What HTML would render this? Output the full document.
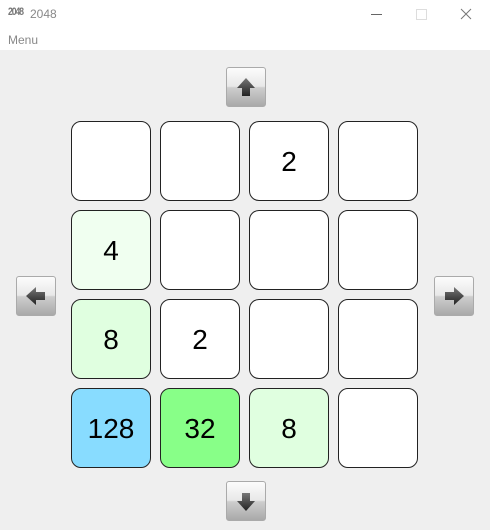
<!DOCTYPE html><html><head><style>
body{margin:0;width:490px;height:530px;background:#efefef;font-family:"Liberation Sans",sans-serif;position:relative;overflow:hidden}
.top{position:absolute;left:0;top:0;width:490px;height:50px;background:#fff}
.t{position:absolute;font-size:12px;color:#888}
.tile{position:absolute;width:78px;height:78px;border:1px solid #222;border-radius:10px;background:#fff;box-sizing:content-box;text-align:center;line-height:80px;font-size:28px;color:#000;font-family:"Liberation Sans",sans-serif}
.btn{position:absolute;width:38px;height:38px;border:1px solid #aaa;border-radius:3px;background:linear-gradient(#fcfcfc,#e8e8e8 48%,#cdcdcd 52%,#a9a9a9)}
.btn svg{position:absolute;left:0;top:0}
</style></head><body>
<div class="top"></div>
<div class="t" style="left:8px;top:6px;font-size:11px;font-weight:bold;color:#777;letter-spacing:-1.5px;transform:scaleX(0.8);transform-origin:left">2048</div>
<div class="t" style="left:30px;top:7px">2048</div>
<div class="t" style="left:8px;top:33px">Menu</div>
<div style="position:absolute;left:371px;top:14px;width:11px;height:1px;background:#666"></div>
<div style="position:absolute;left:416px;top:9px;width:9px;height:9px;border:1px solid #ddd"></div>
<svg style="position:absolute;left:460px;top:8px" width="12" height="12"><path d="M1 1L11 11M11 1L1 11" stroke="#777" stroke-width="1"/></svg>
<div class="btn" style="left:226px;top:67px"><svg width="38" height="38"><defs><linearGradient id="g" x1="0" y1="0" x2="0" y2="1"><stop offset="0" stop-color="#777"/><stop offset="1" stop-color="#222"/></linearGradient></defs><path d="M19 10L28 20H23V28H15V20H10Z" fill="url(#g)"/></svg></div>
<div class="btn" style="left:226px;top:481px"><svg width="38" height="38"><path d="M19 29L28 19H23V11H15V19H10Z" fill="url(#g)"/></svg></div>
<div class="btn" style="left:16px;top:276px"><svg width="38" height="38"><path d="M9 19L19 10V15H28V23H19V28Z" fill="url(#g)"/></svg></div>
<div class="btn" style="left:434px;top:276px"><svg width="38" height="38"><path d="M29 19L19 10V15H10V23H19V28Z" fill="url(#g)"/></svg></div>
<div class="tile" style="left:71px;top:121px"></div>
<div class="tile" style="left:160px;top:121px"></div>
<div class="tile" style="left:249px;top:121px">2</div>
<div class="tile" style="left:338px;top:121px"></div>
<div class="tile" style="left:71px;top:210px;background:#f0fff0">4</div>
<div class="tile" style="left:160px;top:210px"></div>
<div class="tile" style="left:249px;top:210px"></div>
<div class="tile" style="left:338px;top:210px"></div>
<div class="tile" style="left:71px;top:299px;background:#e0ffe0">8</div>
<div class="tile" style="left:160px;top:299px">2</div>
<div class="tile" style="left:249px;top:299px"></div>
<div class="tile" style="left:338px;top:299px"></div>
<div class="tile" style="left:71px;top:388px;background:#88dcff">128</div>
<div class="tile" style="left:160px;top:388px;background:#88ff88">32</div>
<div class="tile" style="left:249px;top:388px;background:#e0ffe0">8</div>
<div class="tile" style="left:338px;top:388px"></div>
</body></html>
